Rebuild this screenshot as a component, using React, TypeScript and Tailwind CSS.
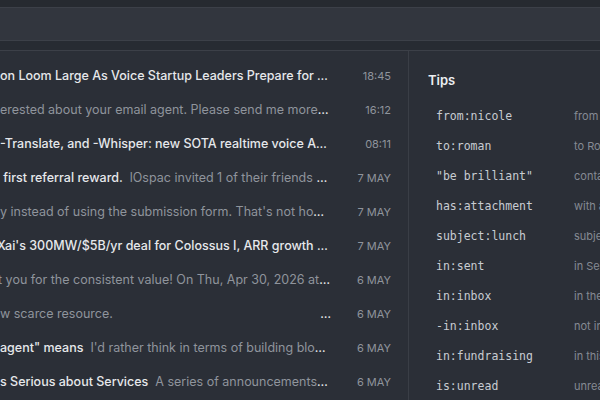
type Mail = {
  subject?: string;
  preview?: string;
  date: string;
  shift?: number;
  trailingDots?: boolean;
};

const mails: Mail[] = [
  { subject: "on Loom Large As Voice Startup Leaders Prepare for the Next Wave of Agents", date: "18:45" },
  { preview: "erested about your email agent. Please send me more details about pricing", date: "16:12" },
  { subject: "-Translate, and -Whisper: new SOTA realtime voice API models", date: "08:11" },
  { subject: "\u00a0first referral reward.", preview: "lOspac invited 1 of their friends to join", date: "7 MAY" },
  { preview: "y instead of using the submission form. That's not how this works", date: "7 MAY" },
  { subject: "Xai's 300MW/$5B/yr deal for Colossus I, ARR growth and more", date: "7 MAY", shift: 3 },
  { preview: "t you for the consistent value! On Thu, Apr 30, 2026 at 9:12 AM", date: "6 MAY", shift: 2 },
  { preview: "w scarce resource.", date: "6 MAY", trailingDots: true },
  { subject: "agent\" means", preview: "I'd rather think in terms of building blocks than agents", date: "6 MAY" },
  { subject: "s Serious about Services", preview: "A series of announcements last week", date: "6 MAY" },
];

const tips = [
  ["from:nicole", "from Nicole"],
  ["to:roman", "to Roman"],
  ["\"be brilliant\"", "contains phrase"],
  ["has:attachment", "with attachment"],
  ["subject:lunch", "subject has lunch"],
  ["in:sent", "in Sent"],
  ["in:inbox", "in the inbox"],
  ["-in:inbox", "not in inbox"],
  ["in:fundraising", "in this label"],
  ["is:unread", "unread"],
];

function MailRow({ mail }: { mail: Mail }) {
  return (
    <div className="flex h-[34px] items-center pr-[17px]">
      <div className="min-w-0 flex-1 overflow-hidden">
        {mail.trailingDots ? (
          <div className="flex items-center justify-between">
            <span className="whitespace-nowrap text-[#8f949c]">{mail.preview}</span>
            <span className="text-[#e6e8eb]">…</span>
          </div>
        ) : (
          <div
            className="truncate text-[#e6e8eb]"
            style={{ marginLeft: mail.shift ? -mail.shift : 0 }}
          >
            {mail.subject && <span className="font-medium text-[#e6e8eb]">{mail.subject}</span>}
            {mail.subject && mail.preview && <span>&nbsp;&nbsp;</span>}
            {mail.preview && <span className="text-[#8f949c]">{mail.preview}</span>}
          </div>
        )}
      </div>
      <div className="w-[60px] shrink-0 text-right text-[11px] text-[#8f949c]">{mail.date}</div>
    </div>
  );
}

export default function App() {
  return (
    <div
      className="flex h-[400px] w-[600px] flex-col overflow-hidden bg-[#2b2f37] text-[12.5px]"
      style={{ fontFamily: "Inter, 'Noto Sans', sans-serif" }}
    >
      <div className="h-[8px] shrink-0 border-b border-[#3c4048] bg-[#262a30]" />
      <div className="h-[33px] shrink-0 border-b border-[#3c4048] bg-[#32363e]" />
      <div className="h-[10px] shrink-0 border-b border-[#3c4048] bg-[#272b32]" />
      <div className="flex min-h-0 flex-1">
        <div className="w-[409px] shrink-0 border-r border-[#3a3e46] pt-[8px]">
          {mails.map((m, i) => (
            <MailRow key={i} mail={m} />
          ))}
        </div>
        <div className="min-w-0 flex-1 pl-[19px] pt-[20px]">
          <div className="text-[13px] font-semibold text-[#eceef1]">Tips</div>
          <div className="mt-[11px] pl-[8px]">
            {tips.map(([q, d]) => (
              <div key={q} className="flex h-[30px] items-center whitespace-nowrap">
                <span
                  className="w-[138px] shrink-0 text-[11.5px] text-[#c8ccd2]"
                  style={{ fontFamily: "'DejaVu Sans Mono', monospace" }}
                >
                  {q}
                </span>
                <span className="text-[11px] text-[#858a93]">{d}</span>
              </div>
            ))}
          </div>
        </div>
      </div>
    </div>
  );
}
